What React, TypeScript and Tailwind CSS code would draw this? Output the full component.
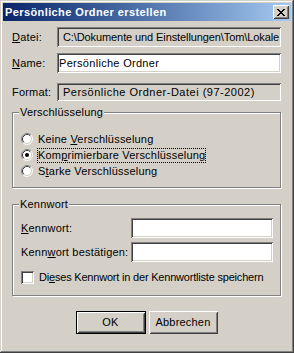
import React from 'react';

const font = { fontFamily: '"Liberation Sans", Arial, sans-serif' };

const sunken =
    'shadow-[inset_1px_1px_0_#808080,inset_-1px_-1px_0_#ffffff,inset_2px_2px_0_#404040,inset_-2px_-2px_0_#d4d0c8]';
const raised =
    'shadow-[inset_1px_1px_0_#ffffff,inset_-1px_-1px_0_#404040,inset_2px_2px_0_#d4d0c8,inset_-2px_-2px_0_#808080]';
const etched = 'border border-[#808080] shadow-[inset_1px_1px_0_#ffffff,1px_1px_0_#ffffff]';

function CloseGlyph() {
    const rows = [
        [0, 1, 6, 7],
        [1, 2, 5, 6],
        [2, 3, 4, 5],
        [3, 4],
        [2, 3, 4, 5],
        [1, 2, 5, 6],
        [0, 1, 6, 7],
    ];
    return (
        <svg width="8" height="7" viewBox="0 0 8 7" shapeRendering="crispEdges">
            {rows.map((xs, y) => xs.map((x) => <rect key={`${x}-${y}`} x={x} y={y} width="1" height="1" fill="#000" />))}
        </svg>
    );
}

function Radio({ checked }: { checked?: boolean }) {
    return (
        <svg width="12" height="12" viewBox="0 0 12 12" className="shrink-0">
            <circle cx="6" cy="6" r="5" fill="#ffffff" />
            <path d="M2.11 9.89 A5.5 5.5 0 0 1 9.89 2.11" stroke="#808080" fill="none" />
            <path d="M9.89 2.11 A5.5 5.5 0 0 1 2.11 9.89" stroke="#ffffff" fill="none" />
            <path d="M2.82 9.18 A4.5 4.5 0 0 1 9.18 2.82" stroke="#404040" fill="none" />
            <path d="M9.18 2.82 A4.5 4.5 0 0 1 2.82 9.18" stroke="#d4d0c8" fill="none" />
            {checked && <circle cx="6" cy="6" r="2" fill="#000" />}
        </svg>
    );
}

function Field({ children, white, className }: { children?: React.ReactNode; white?: boolean; className?: string }) {
    return (
        <div
            className={`${sunken} ${white ? 'bg-white' : 'bg-[#d4d0c8]'} min-w-0 flex items-center overflow-hidden whitespace-nowrap ${className ?? ''}`}
        >
            {children}
        </div>
    );
}

export default function App() {
    return (
        <div
            style={font}
            className="w-[294px] h-[353px] bg-[#d4d0c8] p-[3px] flex flex-col text-[11px] leading-[13px] tracking-[0.2px] text-black shadow-[inset_-1px_-1px_0_#404040,inset_1px_1px_0_#d4d0c8,inset_-2px_-2px_0_#808080,inset_2px_2px_0_#ffffff]"
        >
            {/* Title bar */}
            <div className="h-[18px] flex items-center justify-between pl-[2px] pr-[2px] bg-gradient-to-r from-[#0a246a] to-[#a6caf0]">
                <span className="text-white font-bold text-[11px] tracking-[0.4px]">Persönliche Ordner erstellen</span>
                <div className={`${raised} bg-[#d4d0c8] w-[16px] h-[14px] flex items-center justify-center`}>
                    <CloseGlyph />
                </div>
            </div>

            <div className="flex flex-col pl-[9px] pr-[10px]">
                <div className="flex items-center mt-[6px]">
                    <span className="w-[45px] shrink-0">
                        <u>D</u>atei:
                    </span>
                    <Field className="flex-1 h-[20px] pl-[6px] tracking-[-0.1px]">C:\Dokumente und Einstellungen\Tom\Lokale</Field>
                </div>
                <div className="flex items-center mt-[6px]">
                    <span className="w-[45px] shrink-0">
                        <u>N</u>ame:
                    </span>
                    <Field white className="flex-1 h-[20px] pl-[2px] tracking-[0.3px]">Persönliche Ordner</Field>
                </div>
                <div className="flex items-center mt-[10px]">
                    <span className="w-[45px] shrink-0">Format:</span>
                    <Field className="flex-1 h-[18px] pl-[6px] tracking-[0.5px]">Persönliche Ordner-Datei (97-2002)</Field>
                </div>

                {/* Verschlüsselung */}
                <fieldset className={`${etched} mt-[5px] h-[82px] pl-[8px]`}>
                    <legend className="bg-[#d4d0c8] -ml-[2px] px-[1px]">Verschlüsselung</legend>
                    <div className="flex flex-col mt-[14px] gap-[4px]">
                        <div className="flex items-center h-[12px] gap-[5px]">
                            <Radio />
                            <span>
                                Keine <u>V</u>erschlüsselung
                            </span>
                        </div>
                        <div className="flex items-center h-[12px] gap-[4px]">
                            <Radio checked />
                            <span className="border border-dotted border-black leading-[13px]">
                                Kom<u>p</u>rimierbare Verschlüsselung
                            </span>
                        </div>
                        <div className="flex items-center h-[12px] gap-[5px]">
                            <Radio />
                            <span>
                                S<u>t</u>arke Verschlüsselung
                            </span>
                        </div>
                    </div>
                </fieldset>

                {/* Kennwort */}
                <fieldset className={`${etched} mt-[10px] h-[98px] pl-[8px] pr-[7px]`}>
                    <legend className="bg-[#d4d0c8] -ml-[2px] px-[1px]">Kennwort</legend>
                    <div className="flex items-center mt-[7px]">
                        <span className="w-[110px] shrink-0 whitespace-nowrap">
                            <u>K</u>ennwort:
                        </span>
                        <Field white className="flex-1 h-[20px]" />
                    </div>
                    <div className="flex items-center mt-[4px]">
                        <span className="w-[110px] shrink-0 whitespace-nowrap">
                            Kenn<u>w</u>ort bestätigen:
                        </span>
                        <Field white className="flex-1 h-[20px]" />
                    </div>
                    <div className="flex items-center mt-[9px] gap-[5px]">
                        <div className={`${sunken} bg-white w-[13px] h-[13px] shrink-0`} />
                        <span className="whitespace-nowrap tracking-[-0.2px]">
                            Di<u>e</u>ses Kennwort in der Kennwortliste speichern
                        </span>
                    </div>
                </fieldset>

                {/* Buttons */}
                <div className="flex justify-center gap-[3px] mt-[15px]">
                    <div className="border border-black">
                        <div className={`${raised} w-[68px] h-[21px] flex items-center justify-center`}>OK</div>
                    </div>
                    <div className={`${raised} w-[69px] h-[23px] flex items-center justify-center`}>Abbrechen</div>
                </div>
            </div>
        </div>
    );
}
